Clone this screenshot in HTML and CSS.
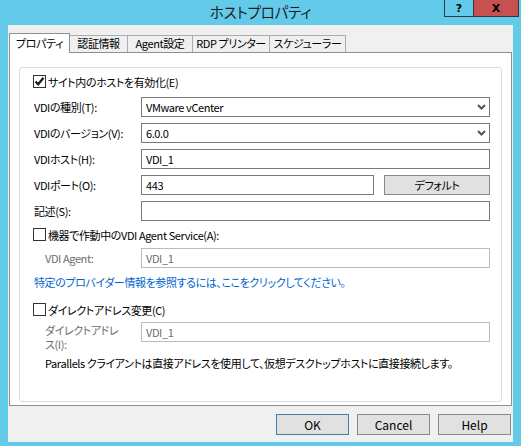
FILE: index.html
```html
<!DOCTYPE html>
<html lang="ja">
<head>
<meta charset="utf-8">
<title>ホストプロパティ</title>
<link rel="stylesheet" href="styles.css">
</head>
<body>
<div class="titlebar">
  <h1 class="title">ホストプロパティ</h1>
  <div class="controls">
    <span class="ctl help">?</span>
    <span class="ctl close">X</span>
  </div>
</div>
<div class="client">
  <div class="tabs">
    <div class="tab active w1">プロパティ</div>
    <div class="tab w2">認証情報</div>
    <div class="tab w3">Agent設定</div>
    <div class="tab w4">RDP プリンター</div>
    <div class="tab w5">スケジューラー</div>
  </div>
  <div class="panel">
    <div class="group">
      <div class="check">
        <span class="box"><svg width="11" height="11" viewBox="0 0 11 11"><path d="M1.5 5.5 L4.2 8.3 L9.5 1.8" fill="none" stroke="#1a1a1a" stroke-width="2.2"/></svg></span>
        <span>サイト内のホストを有効化(E)</span>
      </div>
      <div class="row first">
        <span class="lbl">VDIの種別(T):</span>
        <div class="field combo"><span>VMware vCenter</span><svg width="9" height="6" viewBox="0 0 9 6"><path d="M1 1 L4.5 4.5 L8 1" fill="none" stroke="#555" stroke-width="2"/></svg></div>
      </div>
      <div class="row">
        <span class="lbl">VDIのバージョン(V):</span>
        <div class="field combo"><span>6.0.0</span><svg width="9" height="6" viewBox="0 0 9 6"><path d="M1 1 L4.5 4.5 L8 1" fill="none" stroke="#555" stroke-width="2"/></svg></div>
      </div>
      <div class="row">
        <span class="lbl">VDIホスト(H):</span>
        <div class="field"><span>VDI_1</span></div>
      </div>
      <div class="row">
        <span class="lbl">VDIポート(O):</span>
        <div class="field"><span>443</span></div>
        <div class="btn default-btn">デフォルト</div>
      </div>
      <div class="row">
        <span class="lbl">記述(S):</span>
        <div class="field"></div>
      </div>
      <div class="check agent-check">
        <span class="box"></span>
        <span>機器で作動中のVDI Agent Service(A):</span>
      </div>
      <div class="row agent-row">
        <span class="lbl sub disabled">VDI Agent:</span>
        <div class="field disabled-field"><span>VDI_1</span></div>
      </div>
      <div class="link">特定のプロバイダー情報を参照するには、ここをクリックしてください。</div>
      <div class="check direct-check">
        <span class="box"></span>
        <span>ダイレクトアドレス変更(C)</span>
      </div>
      <div class="row direct-row">
        <span class="lbl sub disabled two">ダイレクトアドレ<br>ス(I):</span>
        <div class="field disabled-field"><span>VDI_1</span></div>
      </div>
      <p class="note">Parallels クライアントは直接アドレスを使用して、仮想デスクトップホストに直接接続します。</p>
    </div>
  </div>
  <div class="buttons">
    <div class="btn dlg ok">OK</div>
    <div class="btn dlg">Cancel</div>
    <div class="btn dlg">Help</div>
  </div>
</div>
</body>
</html>
```

FILE: styles.css
```css
html, body {
  margin: 0;
  padding: 0;
}
body {
  width: 521px;
  height: 446px;
  overflow: hidden;
  background: #63CAEA;
  font-family: "Noto Sans CJK JP", "Noto Sans", sans-serif;
  font-feature-settings: "palt";
  font-size: 11px;
  letter-spacing: -0.4px;
  color: #000;
}
.titlebar {
  height: 25px;
  display: grid;
  grid-template-columns: 1fr auto 1fr;
}
.title {
  grid-column: 2;
  margin: 0;
  font-weight: normal;
  font-size: 14.5px;
  letter-spacing: -0.2px;
  line-height: 24px;
  color: #1e1e1e;
}
.controls {
  grid-column: 3;
  justify-self: end;
  align-self: start;
  display: flex;
  margin-right: 2px;
}
.ctl {
  height: 17px;
  box-sizing: border-box;
  border: 1px solid #2b3a40;
  border-top: none;
  display: flex;
  align-items: center;
  justify-content: center;
  font-family: "DejaVu Sans", sans-serif;
  font-weight: bold;
  font-size: 11px;
  letter-spacing: 0;
  color: #000;
}
.help {
  width: 29px;
  border-right: none;
  background: #63CAEA;
}
.close {
  width: 46px;
  background: #C75050;
}
.client {
  margin: 0 8px;
  height: 417px;
  box-sizing: border-box;
  background: #F0F0F0;
  padding: 8px 1px 0 1px;
}
.tabs {
  display: flex;
  align-items: flex-end;
  height: 19px;
}
.tab {
  height: 17px;
  box-sizing: border-box;
  border: 1px solid #ACACAC;
  border-bottom: none;
  margin-left: -1px;
  background: #F0F0F0;
  text-align: center;
  line-height: 15px;
  white-space: nowrap;
}
.tab.active {
  position: relative;
  z-index: 1;
  height: 20px;
  margin-bottom: -1px;
  margin-left: 0;
  background: #fff;
  border-color: #8E8F8F;
  line-height: 19px;
}
.w1 { width: 61px; }
.w2 { width: 59px; }
.w3 { width: 66px; }
.w4 { width: 78px; }
.w5 { width: 77px; }
.panel {
  height: 354px;
  box-sizing: border-box;
  border: 1px solid #8E8F8F;
  background: #fff;
  padding: 14px 9px 0 9px;
}
.group {
  height: 335px;
  box-sizing: border-box;
  border: 1px solid #D5DFE5;
  border-radius: 3px;
  padding: 7px 11px 0 14px;
}
.check {
  display: flex;
  align-items: center;
  height: 13px;
  margin-left: -1px;
  gap: 2px;
  white-space: nowrap;
}
.box {
  width: 13px;
  height: 13px;
  box-sizing: border-box;
  border: 1px solid #333;
  background: #fff;
  display: flex;
  align-items: center;
  justify-content: center;
  flex: none;
}
.row {
  display: flex;
  align-items: center;
  height: 20px;
  margin-top: 6px;
}
.row.first {
  margin-top: 9px;
}
.lbl {
  width: 107px;
  flex: none;
  white-space: nowrap;
}
.lbl.sub {
  width: 96px;
  padding-left: 11px;
}
.disabled {
  color: #6D6D6D;
}
.field {
  flex: 1;
  height: 20px;
  box-sizing: border-box;
  border: 1px solid #7A7A7A;
  background: #fff;
  padding: 0 3px 0 4px;
  display: flex;
  align-items: center;
  justify-content: space-between;
  white-space: nowrap;
}
.disabled-field {
  border-color: #B9BDC0;
  color: #6D6D6D;
}
.btn {
  box-sizing: border-box;
  background: #E1E1E1;
  border: 1px solid #8A8A8A;
  display: flex;
  align-items: center;
  justify-content: center;
}
.default-btn {
  width: 106px;
  height: 20px;
  margin-left: 10px;
  flex: none;
}
.agent-check {
  margin-top: 7px;
}
.agent-row {
  margin-top: 7px;
}
.link {
  margin-top: 7px;
  line-height: 14px;
  color: #0066CC;
  white-space: nowrap;
}
.direct-check {
  margin-top: 14px;
}
.direct-row {
  align-items: flex-start;
  height: auto;
}
.lbl.two {
  margin-top: 1px;
  line-height: 14px;
  white-space: normal;
}
.note {
  margin: 5px 0 0 0;
  padding-left: 11px;
  line-height: 14px;
  white-space: nowrap;
}
.buttons {
  display: flex;
  justify-content: flex-end;
  gap: 8px;
  margin-top: 8px;
  padding-right: 1px;
}
.dlg {
  width: 73px;
  height: 21px;
  font-size: 12px;
  letter-spacing: 0;
}
.ok {
  border-color: #3C7FB1;
}
```
